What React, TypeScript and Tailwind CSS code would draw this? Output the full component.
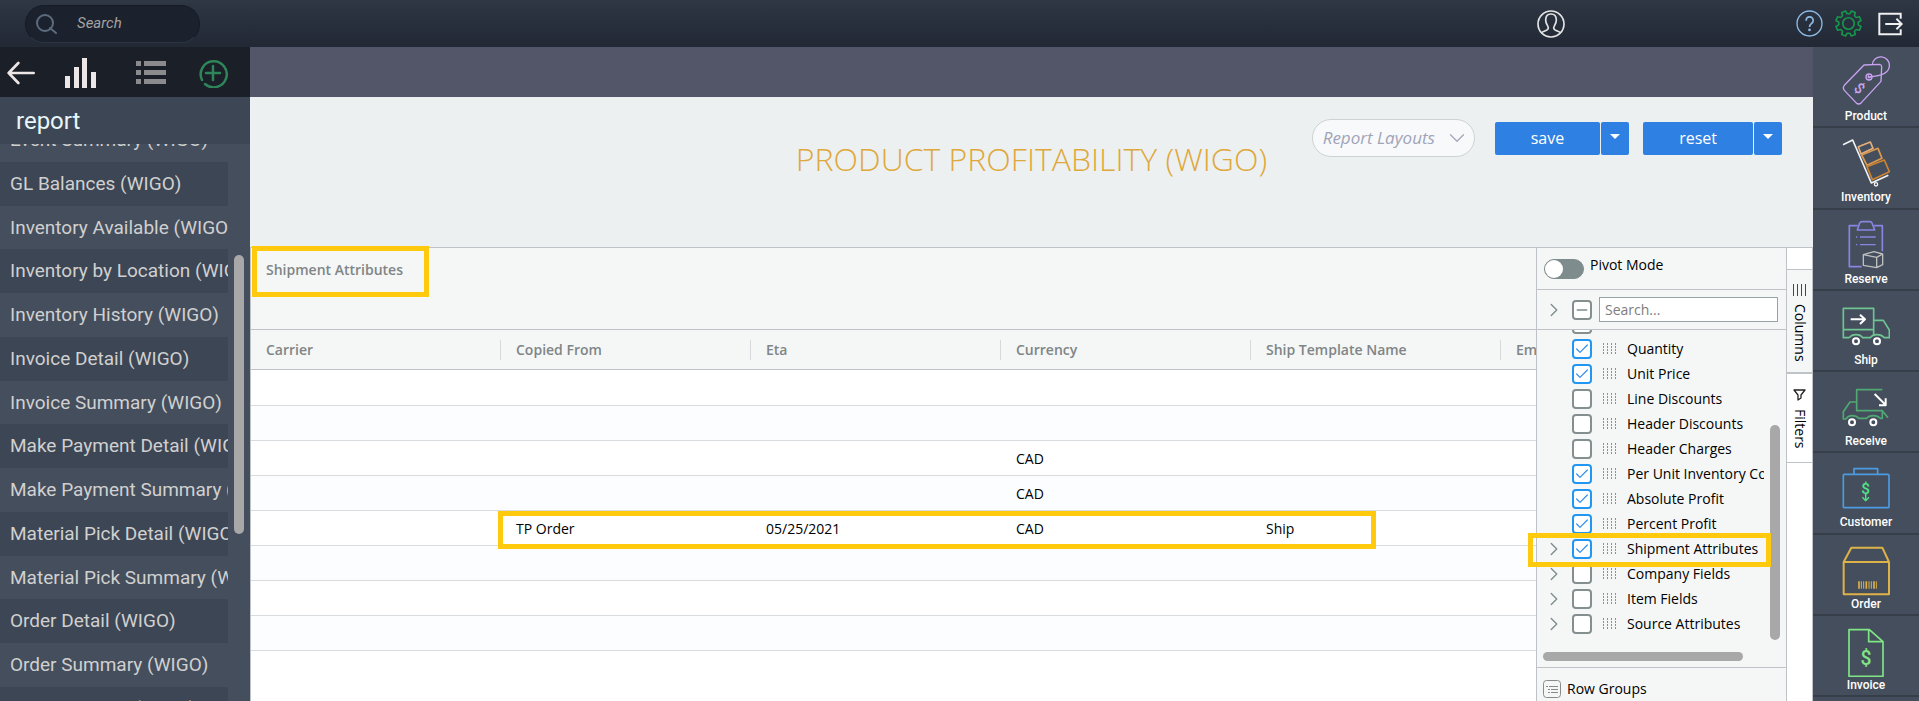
import React from 'react';
import { ChevronDown, ChevronRight, Check, Minus } from 'lucide-react';

const reports = [
  'Event Summary (WIGO)',
  'GL Balances (WIGO)',
  'Inventory Available (WIGO)',
  'Inventory by Location (WIGO)',
  'Inventory History (WIGO)',
  'Invoice Detail (WIGO)',
  'Invoice Summary (WIGO)',
  'Make Payment Detail (WIGO)',
  'Make Payment Summary (WIGO)',
  'Material Pick Detail (WIGO)',
  'Material Pick Summary (WIGO)',
  'Order Detail (WIGO)',
  'Order Summary (WIGO)',
  'Product Detail (WIGO)',
  'Product Summary (WIGO)',
  'Purchase Detail (WIGO)',
];

const columns = ['Carrier', 'Copied From', 'Eta', 'Currency', 'Ship Template Name', 'Employee'];

const rows = [
  ['', '', '', '', '', ''],
  ['', '', '', '', '', ''],
  ['', '', '', 'CAD', '', ''],
  ['', '', '', 'CAD', '', ''],
  ['', 'TP Order', '05/25/2021', 'CAD', 'Ship', ''],
  ['', '', '', '', '', ''],
  ['', '', '', '', '', ''],
  ['', '', '', '', '', ''],
];

interface Field {
  name: string;
  checked?: boolean;
  group?: boolean;
}

const fields: Field[] = [
  { name: 'Item Code' },
  { name: 'Quantity', checked: true },
  { name: 'Unit Price', checked: true },
  { name: 'Line Discounts' },
  { name: 'Header Discounts' },
  { name: 'Header Charges' },
  { name: 'Per Unit Inventory Cost', checked: true },
  { name: 'Absolute Profit', checked: true },
  { name: 'Percent Profit', checked: true },
  { name: 'Shipment Attributes', checked: true, group: true },
  { name: 'Company Fields', group: true },
  { name: 'Item Fields', group: true },
  { name: 'Source Attributes', group: true },
];

const ProductIcon = () => (
  <g stroke="#c9a2f2" strokeWidth="4">
    <path d="M66 27 L113 25 Q119 26 119 32 L117 76 L58 140 Q50 148 42 140 L7 103 Q1 95 7 88 Z" />
    <path d="M91 26 A25 25 0 0 1 142 30 C142 50 118 60 81 63" />
    <circle cx="81" cy="63" r="9" />
    <path d="M79 58 V65 H85" />
    <text x="52" y="112" fontSize="44" textAnchor="middle" fill="#c9a2f2" stroke="none" transform="rotate(42 52 97)">$</text>
  </g>
);

const InventoryIcon = () => (
  <g strokeWidth="5">
    <path d="M49 29 L85 15 L93 34 L57 51 Z" stroke="#e3b07c" />
    <path d="M59 54 L108 34 L120 64 L75 85 Z" stroke="#dc9a50" />
    <path d="M75 89 L127 69 L142 104 L91 128 Z" stroke="#cd8330" />
    <path d="M3 23 L32 9 L88 138 L139 115" stroke="#f2f2f2" />
    <circle cx="102" cy="142" r="5" stroke="#f2f2f2" strokeWidth="4" />
  </g>
);

const ReserveIcon = () => (
  <g stroke="#8a84e2" strokeWidth="5">
    <path d="M59 143 H22 V20 H47 M96 20 H121 V97" />
    <path d="M46 33 L53 12 Q55 8 60 8 H84 Q88 8 90 12 L98 33 Z" />
    <path d="M42 54 H46 M54 54 H101 M42 77 H46 M54 77 H101" strokeWidth="4" />
    <path d="M64 107 L96 98 L122 105 V137 L104 146 L64 139 Z M64 107 L104 115 L122 105 M104 115 V146" stroke="#bfbfbf" strokeWidth="4" />
  </g>
);

const ShipIcon = () => (
  <g stroke="#6fc592" strokeWidth="5">
    <path d="M22 113 H4 V25 H95 V106 M4 89 H95 M95 61 H124 L142 90 V113 H126" />
    <path d="M22 113 Q28 104 42 104 Q56 104 62 113 H85 Q91 104 105 104 Q119 104 126 113" />
    <g stroke="#ffffff" strokeWidth="6">
      <circle cx="42" cy="124" r="9" />
      <circle cx="105" cy="124" r="9" />
      <path d="M26 58 H68 M54 44 L69 58 L54 72" />
    </g>
  </g>
);

const ReceiveIcon = () => (
  <g stroke="#50a873" strokeWidth="5">
    <path d="M121 26 H44 V89 H121 L138 110 M121 89 V112 H114 M44 63 H24 L4 92 V114 H12" />
    <path d="M12 114 Q18 104 30 104 Q44 104 50 112 H74 Q80 104 94 104 Q108 104 114 112" />
    <g stroke="#ffffff" strokeWidth="6">
      <circle cx="30" cy="124" r="9" />
      <circle cx="94" cy="124" r="9" />
      <path d="M98 39 L130 71 M111 73 H131 V52" />
    </g>
  </g>
);

const CustomerIcon = () => (
  <g stroke="#4d9be0" strokeWidth="5">
    <rect x="4" y="37" width="137" height="100" rx="3" />
    <path d="M36 37 V20 H107 V37" />
    <text x="71" y="95" fontSize="46" textAnchor="middle" fill="#4fe388" stroke="none">$</text>
    <path d="M71 96 V115 M61 106 L71 116 L81 106" stroke="#4fe388" strokeWidth="4" />
  </g>
);

const OrderIcon = () => (
  <g stroke="#ddb248" strokeWidth="6">
    <path d="M28 11 H121 L141 54 V151 H5 V54 Z M5 54 H141" />
    <path d="M51 112 V134 M73 112 V134 M96 112 V134" strokeWidth="5" />
    <path d="M58 112 V134 M65 112 V134 M81 112 V134 M88 112 V134 M103 112 V134" strokeWidth="3" />
  </g>
);

const InvoiceIcon = () => (
  <g stroke="#80e685" strokeWidth="5">
    <path d="M21 14 H82 L123 50 V154 H21 Z M80 14 V50 H123" />
    <text x="72" y="121" fontSize="58" textAnchor="middle" fill="#80e685" stroke="none">$</text>
  </g>
);

const modules = [
  { name: 'Product', Icon: ProductIcon },
  { name: 'Inventory', Icon: InventoryIcon },
  { name: 'Reserve', Icon: ReserveIcon },
  { name: 'Ship', Icon: ShipIcon },
  { name: 'Receive', Icon: ReceiveIcon },
  { name: 'Customer', Icon: CustomerIcon },
  { name: 'Order', Icon: OrderIcon },
  { name: 'Invoice', Icon: InvoiceIcon },
];

// eight flat teeth, with a valley pointing straight up
const gearPoints = Array.from({ length: 8 }, (_, i) =>
  [[-15, 29], [-9, 38], [9, 38], [15, 29]].map(([deg, r]) => {
    const a = ((22.5 + i * 45 + deg) * Math.PI) / 180;
    return `${(40 + r * Math.cos(a)).toFixed(1)},${(40 + r * Math.sin(a)).toFixed(1)}`;
  }).join(' ')
).join(' ');

const TopBar = () => (
  <header className="flex h-[47px] shrink-0 items-center justify-between bg-linear-to-b from-[#2f3644] to-[#222935] pr-4 pl-[25px]">
    <label className="flex h-[38px] w-[175px] items-center rounded-full border border-[#161c27] border-b-[#2c3442] bg-[#1b222e] pl-[10px]">
      <svg viewBox="0 0 22 22" className="h-[22px] w-[22px] shrink-0" fill="none" stroke="#5d6b7e" strokeWidth="2" strokeLinecap="round">
        <circle cx="9" cy="10" r="8" />
        <path d="M14 15 L20 20" />
      </svg>
      <input
        type="text"
        aria-label="Search"
        placeholder="Search"
        className="ml-[19px] w-24 bg-transparent text-[15px] italic outline-none placeholder:text-[#a3a3a3]"
      />
    </label>
    <div className="flex items-center">
      <button aria-label="Account" className="mr-[231px]">
        <svg viewBox="0 0 84 84" className="h-7 w-7" fill="none" stroke="#e4e4e4" strokeWidth="5">
          <circle cx="42" cy="42" r="39" />
          <path d="M13 68 C22 62 34 62 34 54 C34 48 26 42 26 30 C26 18 33 12 42 12 C51 12 58 18 58 30 C58 42 50 48 50 54 C50 62 62 62 71 68" />
        </svg>
      </button>
      <button aria-label="Help" className="mr-3">
        <svg viewBox="0 0 80 80" className="h-[27px] w-[27px]" fill="none" stroke="#8db9e2" strokeWidth="4">
          <circle cx="40" cy="40" r="37" />
          <path d="M30 32 C30 17 51 17 51 31 C51 41 40 40 40 50" strokeWidth="5" />
          <circle cx="40" cy="59" r="2" />
        </svg>
      </button>
      <button aria-label="Settings" className="mr-4">
        <svg viewBox="0 0 80 80" className="h-[27px] w-[27px]" fill="none" stroke="#16954b" strokeWidth="5" strokeLinejoin="round">
          <polygon points={gearPoints} />
          <circle cx="40" cy="40" r="17" />
        </svg>
      </button>
      <button aria-label="Log out">
        <svg viewBox="0 0 76 72" className="h-6 w-[25px]" fill="none" stroke="#f0f0f0" strokeWidth="6">
          <path d="M69 20 V5 H4 V67 H69 V52" />
          <path d="M22 36 H70 M56 20 L72 36 L56 52" />
        </svg>
      </button>
    </div>
  </header>
);

const Sidebar = () => (
  <aside className="flex w-[250px] shrink-0 flex-col overflow-hidden bg-[#454e5c]">
    <div className="flex h-[50px] shrink-0 items-center bg-[#1a1f28] pt-px pl-[7px]">
      <button aria-label="Back">
        <svg viewBox="0 0 84 72" className="h-6 w-7" fill="none" stroke="#ece6e6" strokeWidth="8" strokeLinecap="round" strokeLinejoin="round">
          <path d="M34 6 L5 36 L34 66 M5 36 H80" />
        </svg>
      </button>
      <button aria-label="Charts" className="ml-[30px]">
        <svg viewBox="0 0 31 30" className="h-[30px] w-[31px]" fill="#ece6e6">
          <path d="M0 18 h5 v12 h-5 z M9 9 h5 v21 h-5 z M17 0 h5 v30 h-5 z M26 14 h5 v16 h-5 z" />
        </svg>
      </button>
      <button aria-label="List" className="ml-10">
        <svg viewBox="0 0 30 24" className="h-6 w-[30px]" fill="#8b8a8c">
          <path d="M0 0 h5 v5 h-5 z M8 0 h22 v5 h-22 z M0 9 h5 v5 h-5 z M8 9 h22 v5 h-22 z M0 18 h5 v5 h-5 z M8 18 h22 v5 h-22 z" />
        </svg>
      </button>
      <button aria-label="Add report" className="ml-8">
        <svg viewBox="0 0 30 30" className="h-[30px] w-[30px]" fill="none" stroke="#2e8559" strokeWidth="2.5" strokeLinecap="round">
          <path d="M4 22 A13 13 0 1 1 7 26" />
          <path d="M15 8 V22 M8 15 H22" />
        </svg>
      </button>
    </div>
    <h2 className="flex h-[47px] shrink-0 items-center bg-[#3d4654] pl-4 text-2xl text-[#e8f6f8]">report</h2>
    <nav className="flex min-h-0 flex-1">
      <div className="w-[228px] overflow-hidden">
        <ul className="-mt-[26px] grid h-[700px] auto-rows-fr">
          {reports.map((name) => (
            <li key={name} className="flex items-center overflow-hidden pt-px pl-[10px] even:bg-[#3d4654]">
              <a href="#" className="text-[19px] whitespace-nowrap text-[#d0d0d0]">{name}</a>
            </li>
          ))}
        </ul>
      </div>
      <div className="mt-[111px] ml-[6px] h-[279px] w-[10px] rounded-full bg-[#a8a8a8]" />
    </nav>
  </aside>
);

const SplitButton = ({ label }: { label: string }) => (
  <div className="flex gap-px text-white">
    <button className="h-[33px] rounded-xs bg-[#2f80e3] px-9 text-base">{label}</button>
    <button aria-label={`${label} options`} className="flex h-[33px] w-7 justify-center rounded-xs bg-[#2f80e3] pt-3">
      <svg viewBox="0 0 10 5" className="h-[5px] w-[10px]" fill="currentColor">
        <path d="M0 0 H10 L5 5 Z" />
      </svg>
    </button>
  </div>
);

const PageHeader = () => (
  <div className="grid h-[150px] shrink-0 grid-cols-[1fr_auto_1fr] items-start bg-[#ecf0f1] pt-[22px]">
    <div />
    <h1 className="pt-4 text-[32px] font-light text-[#dfa83c]">PRODUCT PROFITABILITY (WIGO)</h1>
    <div className="flex items-center justify-end gap-[14px] pr-[31px]">
      <div className="relative mr-[6px]">
        <select
          aria-label="Report Layouts"
          className="h-[38px] w-[163px] appearance-none rounded-full border border-[#cdd3d5] bg-[#f8f9fb] pl-[10px] text-[17px] text-[#9fa4b8] italic"
        >
          <option>Report Layouts</option>
        </select>
        <ChevronDown className="pointer-events-none absolute top-[6px] right-[5px] h-[26px] w-[26px] text-[#a3a7ba]" strokeWidth={1.2} />
      </div>
      <SplitButton label="save" />
      <SplitButton label="reset" />
    </div>
  </div>
);

const Highlight = ({ className }: { className: string }) => (
  <div className={`pointer-events-none absolute border-[5px] border-[#ffc90e] ${className}`} />
);

const DataGrid = () => (
  <div className="relative min-w-0 flex-1 overflow-hidden border-t border-l border-[#bdc3c7] bg-white">
    <table className="w-[1500px] table-fixed border-separate border-spacing-0 text-left text-sm">
      <thead className="bg-[#f5f7f7] text-[#808586]">
        <tr>
          <th colSpan={6} className="h-[82px] border-b border-[#bdc3c7] pt-3 pl-[15px] align-top font-semibold">Shipment Attributes</th>
        </tr>
        <tr>
          {columns.map((name) => (
            <th key={name} className="h-10 border-b border-[#bdc3c7] p-0 font-semibold">
              <div className="flex h-5 items-center border-r border-[#d5d9db] pl-[15px]">{name}</div>
            </th>
          ))}
        </tr>
      </thead>
      <tbody>
        {rows.map((row, i) => (
          <tr key={i} className="group even:bg-[#fcfdfe]">
            {row.map((cell, j) => (
              <td key={j} className="h-[35px] border-b border-[#d9dcde] pt-px pb-0 pl-[15px] group-first:h-9">{cell}</td>
            ))}
          </tr>
        ))}
      </tbody>
    </table>
  </div>
);

const TickBox = ({ label, id, checked, partial }: { label?: string; id?: string; checked?: boolean; partial?: boolean }) => (
  <span className="relative flex h-5 w-5 shrink-0">
    <input
      type="checkbox"
      id={id}
      aria-label={label}
      defaultChecked={checked}
      className="h-5 w-5 appearance-none rounded border-2 border-[#858f90] bg-white checked:border-[#2196f3]"
    />
    {checked && <Check className="pointer-events-none absolute top-[2px] left-[2px] h-4 w-4 text-[#2f8fee]" strokeWidth={1.8} />}
    {partial && <Minus className="pointer-events-none absolute top-[2px] left-[2px] h-4 w-4 text-[#7f8c8d]" strokeWidth={2.4} />}
  </span>
);

const Expander = () => <ChevronRight className="h-[22px] w-[22px] text-[#7f8c8d]" strokeWidth={1.5} />;

const DragHandle = () => (
  <svg viewBox="0 0 15 11" className="ml-[10px] h-[11px] w-[15px] shrink-0" stroke="#8f8f8f" strokeWidth="1" strokeDasharray="2 1">
    <path d="M1.5 0 V11 M5.5 0 V11 M9.5 0 V11 M13.5 0 V11" />
  </svg>
);

const ColumnsPanel = () => (
  <section className="flex w-[251px] shrink-0 flex-col border-x border-t border-[#bdc3c7] bg-[#f5f7f7] text-sm">
    <label className="flex h-[42px] shrink-0 items-start border-b border-[#bdc3c7] pl-[7px]">
      <input
        type="checkbox"
        className="mt-[11px] h-5 w-10 appearance-none rounded-full border border-[#7f8c8d] bg-[#7f8c8d] before:block before:h-[18px] before:w-[18px] before:rounded-full before:bg-white"
      />
      <span className="mt-[7px] ml-[6px]">Pivot Mode</span>
    </label>
    <div className="flex h-10 shrink-0 items-center border-b border-[#bdc3c7] pr-2 pl-[6px]">
      <Expander />
      <span className="ml-[7px]">
        <TickBox label="Select all columns" partial />
      </span>
      <input
        type="text"
        aria-label="Search columns"
        placeholder="Search..."
        className="ml-[7px] h-[25px] min-w-0 flex-1 border border-[#95a5a6] bg-white px-[5px] placeholder:text-[#7d7d7d]"
      />
    </div>
    <div className="flex h-[338px] shrink-0 flex-col border-b border-[#bdc3c7]">
      <div className="flex">
        <ul className="h-[307px] w-[227px] overflow-hidden">
          {fields.map((field, i) => (
            <li key={field.name} className="flex h-[25px] items-center pl-[6px] whitespace-nowrap first:-mt-[19px]">
              <span className="w-[29px] shrink-0">{field.group && <Expander />}</span>
              <TickBox id={`field-${i}`} checked={field.checked} />
              <DragHandle />
              <label htmlFor={`field-${i}`} className="ml-[10px]">{field.name}</label>
            </li>
          ))}
        </ul>
        <div className="mt-[95px] ml-[6px] h-[215px] w-[10px] rounded-full bg-[#a8a8a8]" />
      </div>
      <div className="mt-3 ml-[6px] h-[9px] w-[200px] rounded-full bg-[#a8a8a8]" />
    </div>
    <div className="flex items-center gap-[6px] px-[6px] py-[11px]">
      <svg viewBox="0 0 18 18" className="h-[18px] w-[18px]" fill="none" stroke="#8a8a8a" strokeWidth="1">
        <rect x="0.5" y="0.5" width="17" height="17" rx="3" />
        <path d="M3 6.5 H5 M6 6.5 H15 M5 9.5 H7 M8 9.5 H15 M5 12.5 H7 M8 12.5 H15" />
      </svg>
      <span>Row Groups</span>
    </div>
  </section>
);

const SideTabs = () => (
  <div className="flex w-[26px] shrink-0 flex-col border-t border-r border-[#bdc3c7] bg-white pt-[21px] text-sm">
    <button className="flex h-[105px] flex-col items-center gap-2 border-t border-b-2 border-[#bdc3c7] bg-[#f5f7f7] pt-[14px]">
      <svg viewBox="0 0 13 12" className="h-3 w-[13px]" stroke="#4a4a3a" strokeWidth="1">
        <path d="M0.5 0 V12 M4.5 0 V12 M8.5 0 V12 M12.5 0 V12" />
      </svg>
      <span className="[writing-mode:vertical-lr]">Columns</span>
    </button>
    <button className="flex h-[89px] flex-col items-center gap-2 border-b border-[#bdc3c7] pt-[15px]">
      <svg viewBox="0 0 13 12" className="h-3 w-[13px]" fill="none" stroke="#222" strokeWidth="1.3" strokeLinejoin="round">
        <path d="M1 1 H12 L8 6 V9 L5 11 V6 Z" />
      </svg>
      <span className="[writing-mode:vertical-lr]">Filters</span>
    </button>
  </div>
);

const ModuleNav = () => (
  <nav className="w-[106px] shrink-0 overflow-hidden bg-[#454e5c]">
    <div className="grid h-[650px] auto-rows-fr">
      {modules.map(({ name, Icon }) => (
        <a key={name} href="#" className="flex flex-col items-center border-b-2 border-[#363e4a] pt-[9px] text-xs font-medium text-white">
          <svg viewBox="0 0 144 156" className="h-[52px] w-12 shrink-0" fill="none" strokeLinejoin="round">
            <Icon />
          </svg>
          {name}
        </a>
      ))}
    </div>
  </nav>
);

export default function App() {
  return (
    <div className="flex h-screen flex-col overflow-hidden font-[Roboto,sans-serif]">
      <TopBar />
      <div className="flex min-h-0 flex-1">
        <Sidebar />
        <main className="flex min-w-0 flex-1 flex-col overflow-hidden font-['Open_Sans','Noto_Sans',sans-serif] text-black">
          <div className="h-[50px] shrink-0 bg-[#535669]" />
          <PageHeader />
          <div className="relative flex min-h-0 flex-1">
            <DataGrid />
            <ColumnsPanel />
            <SideTabs />
            <Highlight className="-top-px left-[2px] h-[51px] w-[177px]" />
            <Highlight className="top-[264px] left-[248px] h-[38px] w-[878px]" />
            <Highlight className="top-[286px] right-[42px] h-[34px] w-[243px]" />
          </div>
        </main>
        <ModuleNav />
      </div>
    </div>
  );
}
